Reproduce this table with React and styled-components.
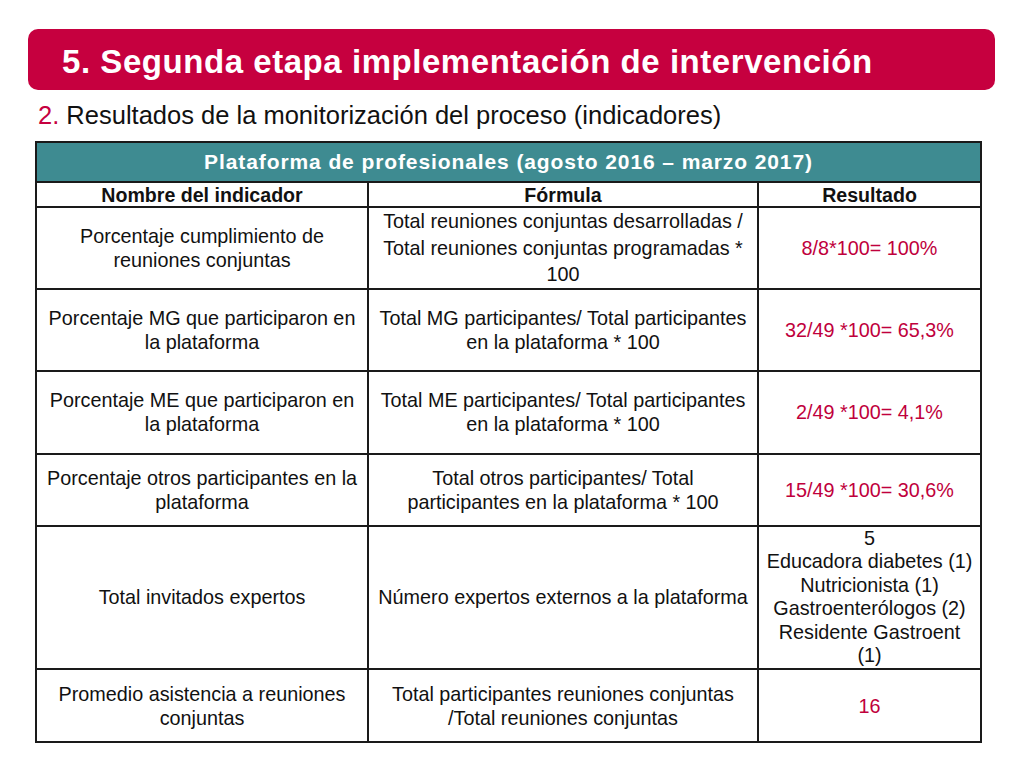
import React from "react";
import styled, { createGlobalStyle } from "styled-components";

const GlobalStyle = createGlobalStyle`
  body {
    margin: 0;
    background: #ffffff;
    font-family: "Liberation Sans", Arial, sans-serif;
    color: #111111;
  }
`;

const rows = [
  {
    name: ["Porcentaje cumplimiento de", "reuniones conjuntas"],
    formula: [
      "Total reuniones conjuntas desarrolladas /",
      "Total reuniones conjuntas programadas *",
      "100",
    ],
    result: ["8/8*100= 100%"],
    highlight: true,
    height: 81,
    loose: true,
  },
  {
    name: ["Porcentaje MG que participaron en", "la plataforma"],
    formula: ["Total MG participantes/ Total participantes", "en la plataforma * 100"],
    result: ["32/49 *100= 65,3%"],
    highlight: true,
    height: 82,
  },
  {
    name: ["Porcentaje ME que participaron en", "la plataforma"],
    formula: ["Total ME participantes/ Total participantes", "en la plataforma * 100"],
    result: ["2/49 *100= 4,1%"],
    highlight: true,
    height: 83,
  },
  {
    name: ["Porcentaje otros participantes en la", "plataforma"],
    formula: ["Total otros participantes/ Total", "participantes en la plataforma * 100"],
    result: ["15/49 *100= 30,6%"],
    highlight: true,
    height: 72,
  },
  {
    name: ["Total invitados expertos"],
    formula: ["Número expertos externos a la plataforma"],
    result: [
      "5",
      "Educadora diabetes (1)",
      "Nutricionista (1)",
      "Gastroenterólogos (2)",
      "Residente Gastroent",
      "(1)",
    ],
    highlight: false,
    height: 143,
  },
  {
    name: ["Promedio asistencia a reuniones", "conjuntas"],
    formula: ["Total participantes reuniones conjuntas", "/Total reuniones conjuntas"],
    result: ["16"],
    highlight: true,
    height: 73,
  },
];

function Lines({ lines }) {
  return lines.map((line, i) => (
    <React.Fragment key={i}>
      {i > 0 && <br />}
      {line}
    </React.Fragment>
  ));
}

export default function App() {
  return (
    <>
      <GlobalStyle />
      <Slide>
        <TitleBar>
          <Title>5. Segunda etapa implementación de intervención</Title>
        </TitleBar>
        <Subtitle>
          <Num>2.</Num> Resultados de la monitorización del proceso (indicadores)
        </Subtitle>
        <Table>
          <colgroup>
            <col style={{ width: 332 }} />
            <col style={{ width: 390 }} />
            <col style={{ width: 223 }} />
          </colgroup>
          <thead>
            <tr>
              <Banner colSpan={3}>
                Plataforma de profesionales (agosto 2016 – marzo 2017)
              </Banner>
            </tr>
            <tr>
              <HeadCell>Nombre del indicador</HeadCell>
              <HeadCell>Fórmula</HeadCell>
              <HeadCell>Resultado</HeadCell>
            </tr>
          </thead>
          <tbody>
            {rows.map((row, i) => (
              <Row key={i} $h={row.height}>
                <Cell>
                  <Lines lines={row.name} />
                </Cell>
                <Cell $loose={row.loose}>
                  <Lines lines={row.formula} />
                </Cell>
                <ResultCell $accent={row.highlight} $tight={row.result.length > 2}>
                  <Lines lines={row.result} />
                </ResultCell>
              </Row>
            ))}
          </tbody>
        </Table>
      </Slide>
    </>
  );
}

const Slide = styled.div`
  width: 1024px;
  height: 768px;
  box-sizing: border-box;
  padding: 29px 29px 0 28px;
  display: flex;
  flex-direction: column;
`;

const TitleBar = styled.div`
  height: 61px;
  background: #c6003f;
  border-radius: 10px;
  display: flex;
  align-items: center;
  padding-left: 34px;
`;

const Title = styled.h1`
  margin: 0;
  color: #ffffff;
  font-size: 33px;
  font-weight: 700;
  letter-spacing: 0.55px;
  padding-top: 5px;
`;

const Subtitle = styled.div`
  margin: 7px 0 0 10px;
  font-size: 25.5px;
  line-height: 36px;
  color: #111111;
`;

const Num = styled.span`
  color: #c6003f;
`;

const Table = styled.table`
  margin: 8px 0 0 7px;
  width: 945px;
  table-layout: fixed;
  border-collapse: collapse;
  border: 2px solid #1a1a1a;
  text-align: center;
`;

const Banner = styled.th`
  height: 38px;
  padding: 0;
  background: #3e8b91;
  color: #ffffff;
  font-size: 21px;
  font-weight: 700;
  letter-spacing: 0.9px;
  border: 2px solid #1a1a1a;
`;

const HeadCell = styled.th`
  height: 23px;
  padding: 0;
  font-size: 19.6px;
  line-height: 20px;
  font-weight: 700;
  color: #111111;
  border: 2px solid #1a1a1a;
  border-top-width: 1px;
`;

const Row = styled.tr`
  height: ${(p) => p.$h}px;
`;

const Cell = styled.td`
  padding: 0 2px;
  font-size: 19.8px;
  line-height: ${(p) => (p.$loose ? "26.5px" : "24px")};
  color: #111111;
  border: 2px solid #1a1a1a;
  vertical-align: middle;
`;

const ResultCell = styled(Cell)`
  line-height: ${(p) => (p.$tight ? "23.6px" : "24px")};
  color: ${(p) => (p.$accent ? "#c0003c" : "#111111")};
`;
